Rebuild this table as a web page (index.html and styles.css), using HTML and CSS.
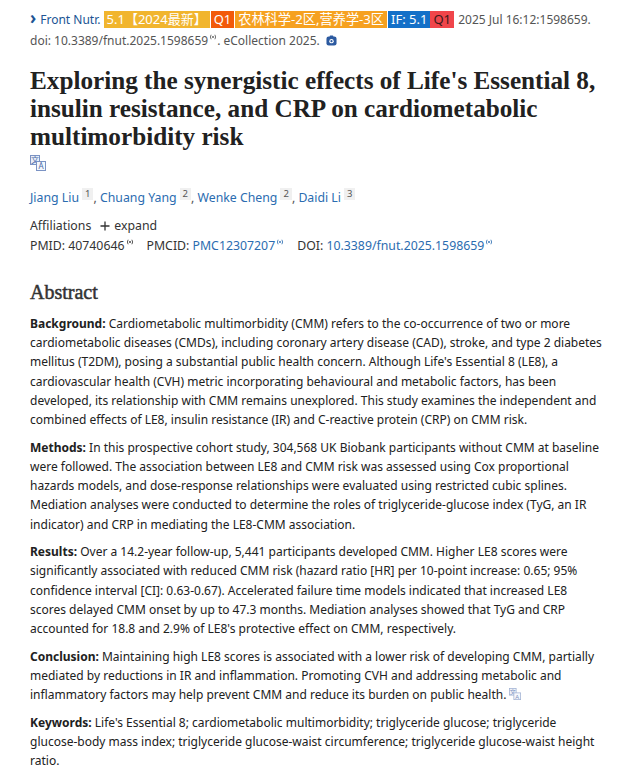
FILE: index.html
```html
<!DOCTYPE html>
<html lang="en">
<head>
<meta charset="utf-8">
<title>Exploring the synergistic effects of Life's Essential 8</title>
<link rel="stylesheet" href="styles.css">
</head>
<body>
<main class="page">
  <div class="cite">
    <div class="cite-line">
      <span class="chev">&#x203A;</span><span class="journal">Front Nutr.</span>
      <span class="badge b-gold">5.1【2024最新】</span><span class="badge b-orange">Q1</span><span class="badge b-amber">农林科学-2区,营养学-3区</span><span class="badge b-blue">IF: 5.1</span><span class="badge b-red">Q1</span>
      <span class="date">2025 Jul 16:12:1598659.</span>
    </div>
    <div class="cite-line">
      doi: 10.3389/fnut.2025.1598659<svg class="ref" viewBox="0 0 10 8" aria-hidden="true"><path d="M2.5 1 Q0.5 4 2.5 7 M7.5 1 Q9.5 4 7.5 7" fill="none" stroke="currentColor" stroke-width="1.1"/><circle cx="5" cy="4" r="1.2" fill="currentColor"/></svg>. eCollection 2025.
      <svg class="cam" viewBox="0 0 12 12" aria-hidden="true"><rect x="0.5" y="1.5" width="11" height="10" rx="2.5" fill="#2c5aa0"/><rect x="4" y="0.5" width="4" height="2" rx="0.8" fill="#2c5aa0"/><circle cx="6" cy="6.7" r="2.4" fill="#fff"/><circle cx="6" cy="6.7" r="1.2" fill="#2c5aa0"/></svg>
    </div>
  </div>

  <h1 class="title">Exploring the synergistic effects of Life's Essential 8, insulin resistance, and CRP on cardiometabolic multimorbidity risk</h1>
  <div class="trans">
    <svg class="tr-icon" viewBox="0 0 16 16" aria-hidden="true">
      <rect x="0.5" y="0.5" width="9" height="9" fill="#e8eef8" stroke="#7b93c4"/>
      <text x="5" y="8" font-size="8" text-anchor="middle" fill="#4a6aa8" font-family="Noto Sans CJK SC, sans-serif">文</text>
      <rect x="6.5" y="6.5" width="9" height="9" fill="#f4f7fc" stroke="#7b93c4"/>
      <text x="11" y="14.2" font-size="8" text-anchor="middle" fill="#4a6aa8" font-family="Noto Sans, sans-serif">A</text>
    </svg>
  </div>

  <div class="authors">
    <a class="author">Jiang Liu</a><sup class="aff">1</sup>, <a class="author">Chuang Yang</a><sup class="aff">2</sup>, <a class="author">Wenke Cheng</a><sup class="aff">2</sup>, <a class="author">Daidi Li</a><sup class="aff">3</sup>
  </div>

  <div class="affiliations">
    <span>Affiliations</span>
    <span class="expand"><svg class="plus" viewBox="0 0 10 10" aria-hidden="true"><path d="M5 0.5 V9.5 M0.5 5 H9.5" stroke="#333" stroke-width="1.3"/></svg>expand</span>
  </div>

  <div class="ids">
    <span class="id">PMID: 40740646<svg class="ref" viewBox="0 0 10 8" aria-hidden="true"><path d="M2.5 1 Q0.5 4 2.5 7 M7.5 1 Q9.5 4 7.5 7" fill="none" stroke="currentColor" stroke-width="1.1"/><circle cx="5" cy="4" r="1.2" fill="currentColor"/></svg></span>
    <span class="id">PMCID: <a class="link">PMC12307207<svg class="ref" viewBox="0 0 10 8" aria-hidden="true"><path d="M2.5 1 Q0.5 4 2.5 7 M7.5 1 Q9.5 4 7.5 7" fill="none" stroke="currentColor" stroke-width="1.1"/><circle cx="5" cy="4" r="1.2" fill="currentColor"/></svg></a></span>
    <span class="id">DOI: <a class="link">10.3389/fnut.2025.1598659<svg class="ref" viewBox="0 0 10 8" aria-hidden="true"><path d="M2.5 1 Q0.5 4 2.5 7 M7.5 1 Q9.5 4 7.5 7" fill="none" stroke="currentColor" stroke-width="1.1"/><circle cx="5" cy="4" r="1.2" fill="currentColor"/></svg></a></span>
  </div>

  <section class="abstract">
    <h2 class="abs-title">Abstract</h2>
    <p><strong>Background:</strong> Cardiometabolic multimorbidity (CMM) refers to the co-occurrence of two or more cardiometabolic diseases (CMDs), including coronary artery disease (CAD), stroke, and type 2 diabetes mellitus (T2DM), posing a substantial public health concern. Although Life's Essential 8 (LE8), a cardiovascular health (CVH) metric incorporating behavioural and metabolic factors, has been developed, its relationship with CMM remains unexplored. This study examines the independent and combined effects of LE8, insulin resistance (IR) and C-reactive protein (CRP) on CMM risk.</p>
    <p><strong>Methods:</strong> In this prospective cohort study, 304,568 UK Biobank participants without CMM at baseline were followed. The association between LE8 and CMM risk was assessed using Cox proportional hazards models, and dose-response relationships were evaluated using restricted cubic splines. Mediation analyses were conducted to determine the roles of triglyceride-glucose index (TyG, an IR indicator) and CRP in mediating the LE8-CMM association.</p>
    <p><strong>Results:</strong> Over a 14.2-year follow-up, 5,441 participants developed CMM. Higher LE8 scores were significantly associated with reduced CMM risk (hazard ratio [HR] per 10-point increase: 0.65; 95% confidence interval [CI]: 0.63-0.67). Accelerated failure time models indicated that increased LE8 scores delayed CMM onset by up to 47.3 months. Mediation analyses showed that TyG and CRP accounted for 18.8 and 2.9% of LE8's protective effect on CMM, respectively.</p>
    <p><strong>Conclusion:</strong> Maintaining high LE8 scores is associated with a lower risk of developing CMM, partially mediated by reductions in IR and inflammation. Promoting CVH and addressing metabolic and inflammatory factors may help prevent CMM and reduce its burden on public health. <svg class="tr-small" viewBox="0 0 16 16" aria-hidden="true"><rect x="0.5" y="0.5" width="9" height="9" fill="#eef2f9" stroke="#9fb0d2"/><text x="5" y="8" font-size="8" text-anchor="middle" fill="#7d92c0" font-family="Noto Sans CJK SC, sans-serif">文</text><rect x="6.5" y="6.5" width="9" height="9" fill="#f6f8fc" stroke="#9fb0d2"/><text x="11" y="14.2" font-size="8" text-anchor="middle" fill="#7d92c0" font-family="Noto Sans, sans-serif">A</text></svg></p>
    <p><strong>Keywords:</strong> Life's Essential 8; cardiometabolic multimorbidity; triglyceride glucose; triglyceride glucose-body mass index; triglyceride glucose-waist circumference; triglyceride glucose-waist height ratio.</p>
  </section>
</main>
</body>
</html>
```

FILE: styles.css
```css
html, body {
  margin: 0;
  padding: 0;
  background: #ffffff;
}

body {
  font-family: "Noto Sans", "Noto Sans CJK SC", sans-serif;
  color: #212121;
  font-size: 12.3px;
}

.page {
  padding: 9px 28px 0 30px;
}

.cite {
  color: #555;
  font-size: 12px;
  line-height: 21px;
}

.cite-line {
  white-space: nowrap;
}

.chev {
  color: #205493;
  font-size: 17px;
  font-weight: 700;
  margin-right: 4px;
  line-height: 1;
}

.journal {
  color: #205493;
}

.badge {
  display: inline-block;
  padding: 0 3px;
  margin-right: 1px;
  line-height: 17px;
  color: #fff;
  font-family: "Noto Sans", "Noto Sans CJK SC", sans-serif;
  font-size: 13px;
}

.b-gold { background: #f1b52e; }
.b-orange { background: #f25a0a; }
.b-amber { background: #f6a120; font-size: 13.2px; }
.b-blue { background: #1470c8; margin-right: 0; }
.b-red { background: #f0454a; color: #3a1a1a; }

.date {
  color: #555;
}

.ref {
  width: 8px;
  height: 6px;
  vertical-align: 5px;
  margin-left: 1px;
}

.cam {
  width: 11px;
  height: 11px;
  vertical-align: -1px;
  margin-left: 3px;
}

.title {
  font-family: "Liberation Serif", serif;
  font-weight: 700;
  font-size: 25.2px;
  line-height: 28px;
  color: #212121;
  margin: 16px 0 0 0;
}

.trans {
  margin-top: 4px;
  height: 16px;
}

.tr-icon {
  width: 16px;
  height: 16px;
  display: block;
}

.authors {
  margin-top: 17px;
  line-height: 19px;
  color: #555;
}

.author {
  color: #2b6cb0;
}

.aff {
  display: inline-block;
  font-size: 9.5px;
  line-height: 12px;
  padding: 0 3px;
  margin-left: 3px;
  background: #f0f0f0;
  color: #555;
  vertical-align: 5px;
}

.affiliations {
  margin-top: 9px;
  line-height: 20px;
  color: #333;
  display: flex;
  align-items: center;
  gap: 9px;
}

.expand {
  display: inline-flex;
  align-items: center;
  gap: 4px;
}

.plus {
  width: 10px;
  height: 10px;
}

.ids {
  line-height: 20px;
  color: #333;
  display: flex;
  gap: 13px;
}

.link {
  color: #2b6cb0;
}

.abstract {
  margin-top: 23px;
}

.abs-title {
  font-family: "Liberation Serif", serif;
  font-weight: 400;
  font-size: 20px;
  line-height: 26px;
  color: #333;
  margin: 0 0 9px 0;
  -webkit-text-stroke: 0.5px #333;
}

.abstract p {
  margin: 0 0 8.5px 0;
  font-size: 12px;
  line-height: 19.2px;
  color: #212121;
}

.abstract strong {
  font-weight: 700;
}

.tr-small {
  width: 12px;
  height: 12px;
  vertical-align: -1px;
}
```
